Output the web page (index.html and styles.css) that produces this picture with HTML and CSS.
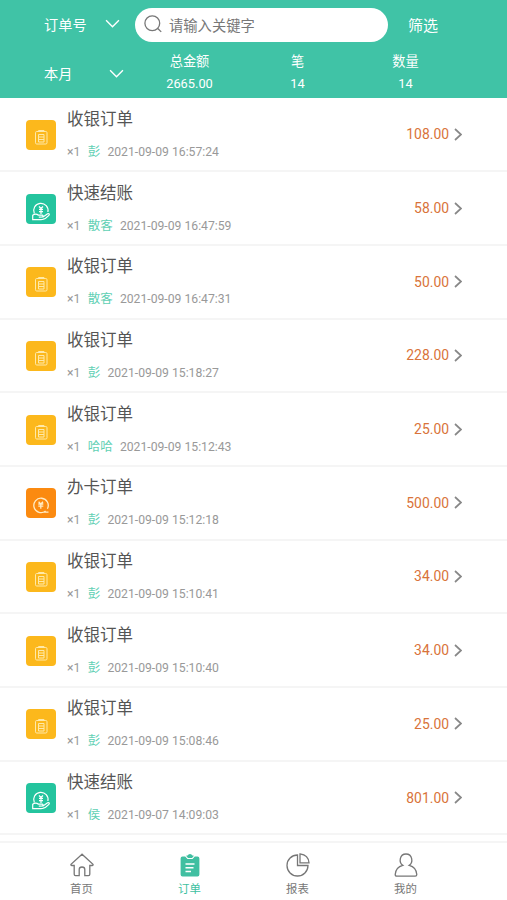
FILE: index.html
```html
<!DOCTYPE html>
<html lang="zh-CN">
  <head>
    <meta charset="UTF-8" />
    <meta name="viewport" content="width=device-width, initial-scale=1.0" />
    <title>订单</title>
    <link rel="stylesheet" href="styles.css" />
  </head>
  <body>
    <!-- shared icons -->
    <svg class="sprite" aria-hidden="true">
      <symbol id="down" viewBox="0 0 14 8">
        <path d="M1 1l6 6 6-6" />
      </symbol>
      <symbol id="right" viewBox="0 0 8 13">
        <path d="M1 1l6 5.5L1 12" />
      </symbol>
      <symbol id="cashier" viewBox="0 0 30 30">
        <rect x="9.5" y="11.5" width="11.5" height="12.5" rx="1.2" />
        <path d="M12.5 11.5v-1H18v1M12.5 14.5h5.5v7.5h-5.5zM12.5 17h5.5M12.5 19.5h5.5" />
      </symbol>
      <symbol id="checkout" viewBox="0 0 30 30">
        <path d="M8.3 19.5a7.2 7.2 0 1 1 13.6-1.5" />
        <path d="M13 12.5l2 2 2-2M15 14.5v5.5M13 15.3h4M13 17.6h4" />
        <path d="M6.7 21.2c2.5-2 4.3-1.2 5.8 0h3.8c1.2.2.9 1.7-.3 1.8l-3.2.2 4.3-.2 4.5-3.2c1.4-.7 2.3.5 1.3 1.5-2 2.2-3.8 3.5-6.2 4-3 .5-6.5.1-10 .3z" />
      </symbol>
      <symbol id="card" viewBox="0 0 30 30">
        <path d="M19.6 23a7.2 7.2 0 1 1 1.8-2.2M18 24.2h4.5" />
        <path d="M12.6 13.8l2.2 2.2 2.2-2.2M12.3 16h5M12.3 18.2h5M14.8 16v4.8" />
      </symbol>
    </svg>

    <header>
      <div class="search-row">
        <div class="picker picker-type">订单号<svg class="down"><use href="#down" /></svg></div>
        <div class="search">
          <svg viewBox="0 0 18 18">
            <circle cx="8.3" cy="8.3" r="7.4" />
            <path d="M13.8 13.5l3.4 3.4" />
          </svg>
          <span>请输入关键字</span>
        </div>
        <div class="filter">筛选</div>
      </div>
      <div class="total-row">
        <div class="picker picker-date">本月<svg class="down"><use href="#down" /></svg></div>
        <div class="total"><span>总金额</span><b>2665.00</b></div>
        <div class="total"><span>笔</span><b>14</b></div>
        <div class="total"><span>数量</span><b>14</b></div>
      </div>
    </header>

    <main>
      <div class="order">
        <svg class="type cashier"><use href="#cashier" /></svg>
        <div class="info">
          <h2>收银订单</h2>
          <p>×1<em>彭</em><time>2021-09-09 16:57:24</time></p>
        </div>
        <span class="amount">108.00</span>
        <svg class="right"><use href="#right" /></svg>
      </div>
      <div class="order">
        <svg class="type checkout"><use href="#checkout" /></svg>
        <div class="info">
          <h2>快速结账</h2>
          <p>×1<em>散客</em><time>2021-09-09 16:47:59</time></p>
        </div>
        <span class="amount">58.00</span>
        <svg class="right"><use href="#right" /></svg>
      </div>
      <div class="order">
        <svg class="type cashier"><use href="#cashier" /></svg>
        <div class="info">
          <h2>收银订单</h2>
          <p>×1<em>散客</em><time>2021-09-09 16:47:31</time></p>
        </div>
        <span class="amount">50.00</span>
        <svg class="right"><use href="#right" /></svg>
      </div>
      <div class="order">
        <svg class="type cashier"><use href="#cashier" /></svg>
        <div class="info">
          <h2>收银订单</h2>
          <p>×1<em>彭</em><time>2021-09-09 15:18:27</time></p>
        </div>
        <span class="amount">228.00</span>
        <svg class="right"><use href="#right" /></svg>
      </div>
      <div class="order">
        <svg class="type cashier"><use href="#cashier" /></svg>
        <div class="info">
          <h2>收银订单</h2>
          <p>×1<em>哈哈</em><time>2021-09-09 15:12:43</time></p>
        </div>
        <span class="amount">25.00</span>
        <svg class="right"><use href="#right" /></svg>
      </div>
      <div class="order">
        <svg class="type card"><use href="#card" /></svg>
        <div class="info">
          <h2>办卡订单</h2>
          <p>×1<em>彭</em><time>2021-09-09 15:12:18</time></p>
        </div>
        <span class="amount">500.00</span>
        <svg class="right"><use href="#right" /></svg>
      </div>
      <div class="order">
        <svg class="type cashier"><use href="#cashier" /></svg>
        <div class="info">
          <h2>收银订单</h2>
          <p>×1<em>彭</em><time>2021-09-09 15:10:41</time></p>
        </div>
        <span class="amount">34.00</span>
        <svg class="right"><use href="#right" /></svg>
      </div>
      <div class="order">
        <svg class="type cashier"><use href="#cashier" /></svg>
        <div class="info">
          <h2>收银订单</h2>
          <p>×1<em>彭</em><time>2021-09-09 15:10:40</time></p>
        </div>
        <span class="amount">34.00</span>
        <svg class="right"><use href="#right" /></svg>
      </div>
      <div class="order">
        <svg class="type cashier"><use href="#cashier" /></svg>
        <div class="info">
          <h2>收银订单</h2>
          <p>×1<em>彭</em><time>2021-09-09 15:08:46</time></p>
        </div>
        <span class="amount">25.00</span>
        <svg class="right"><use href="#right" /></svg>
      </div>
      <div class="order">
        <svg class="type checkout"><use href="#checkout" /></svg>
        <div class="info">
          <h2>快速结账</h2>
          <p>×1<em>侯</em><time>2021-09-07 14:09:03</time></p>
        </div>
        <span class="amount">801.00</span>
        <svg class="right"><use href="#right" /></svg>
      </div>
    </main>

    <nav>
      <a>
        <svg viewBox="0 0 24 24">
          <path d="M12 1.2L1 11.3q-.4 1.2.8 1.2h2.4v8.8q0 1.3 1.3 1.3h3.7v-6q0-2.6 2.8-2.6t2.8 2.6v6h3.7q1.3 0 1.3-1.3v-8.8h2.4q1.2 0 .8-1.2z" />
        </svg>
        首页
      </a>
      <a class="active">
        <svg viewBox="0 0 24 24">
          <path class="fill" d="M4.5 3.5h2.7L9.5 6h5l2.3-2.5h2.7q1.9 0 1.9 1.9v16.2q0 1.9-1.9 1.9h-15q-1.9 0-1.9-1.9V5.4q0-1.9 1.9-1.9z" />
          <path class="fill" d="M8 2.7q1.9 0 2.5-1.2 1.5-1.2 3 0 .6 1.2 2.5 1.2L14 5h-4z" />
          <path class="lines" d="M7.5 11h9M7.5 14.8h8M7.5 18.6h5.5" />
        </svg>
        订单
      </a>
      <a>
        <svg viewBox="0 0 24 24">
          <path d="M11.5 2A10.5 10.5 0 1 0 22 12.5H11.5z" />
          <path d="M14 .9v9h9Q22.500 2 14 .9z" />
        </svg>
        报表
      </a>
      <a>
        <svg viewBox="0 0 24 24">
          <path d="M8.8 12.300C4.500 9.500 5.500 1 12 1s7.500 8.500 3.200 11.300c4 1 7.300 4.500 7.600 9.200q0 1.700-1.600 1.700H2.800q-1.600 0-1.600-1.700c.3-4.700 3.600-8.200 7.600-9.200z" />
        </svg>
        我的
      </a>
    </nav>
  </body>
</html>
```
FILE: styles.css
```css
* {
  box-sizing: border-box;
}

body {
  display: flex;
  flex-direction: column;
  height: 900px;
  margin: 0;
  overflow: hidden;
  background: #fff;
  font-family: Roboto, "Noto Sans CJK SC", sans-serif;
}

svg {
  flex: none;
  fill: none;
  stroke: currentColor;
}

.sprite {
  position: absolute;
  width: 0;
  height: 0;
}

header {
  height: 98px;
  padding-top: 8px;
  background: #40c3a6;
  color: #fff;
}

.search-row {
  display: flex;
  align-items: center;
  height: 34px;
}

.picker {
  display: flex;
  align-items: center;
  justify-content: space-between;
  margin-left: 44px;
  padding-bottom: 3px;
  font-size: 14.2px;
}

.picker-type {
  width: 76px;
}

.picker-date {
  width: 80px;
  height: 49px;
  margin-right: 11.5px;
}

.down {
  width: 15px;
  height: 9px;
  stroke-width: 1.3;
}

.search {
  display: flex;
  align-items: center;
  width: 253px;
  height: 34px;
  margin-left: 15px;
  padding: 0 0 2px 9px;
  border-radius: 17px;
  background: #fff;
  color: #777;
  font-size: 14.3px;
}

.search svg {
  width: 18px;
  height: 18px;
  margin-right: 7px;
  stroke-width: 1.3;
}

.filter {
  margin-left: 20px;
  padding-bottom: 2px;
  font-size: 15px;
}

.total-row {
  display: flex;
  padding-top: 8px;
}

.total {
  display: flex;
  flex-direction: column;
  align-items: center;
  width: 108px;
  padding-top: 1px;
  font-size: 13.2px;
  line-height: 22px;
}

.total b {
  font-size: 12.8px;
  font-weight: 400;
}

main {
  height: 743px;
  padding-top: 0.5px;
}

.order {
  display: flex;
  align-items: center;
  height: 73.7px;
  padding: 1px 45px 0 26px;
  border-bottom: 2px solid #f5f5f5;
}

.type {
  width: 30px;
  height: 30px;
  margin-right: 11px;
  border-radius: 4px;
  color: #fff;
}

.cashier {
  background: #fcb81c;
  color: #ffe9a8;
}

.checkout {
  background: #24c49e;
  stroke-width: 1.2;
}

.card {
  background: #fb8a10;
  color: #ffebc4;
  stroke-width: 1.3;
}

.info {
  flex: 1;
}

.info h2 {
  margin: 1px 0 11px;
  color: #555;
  font-size: 16.5px;
  font-weight: 400;
  line-height: 22px;
}

.info p {
  display: flex;
  margin: 0;
  color: #999;
  font-size: 12.2px;
  line-height: 20px;
}

.info em {
  margin: 0 7px 0 7.5px;
  color: #5fd0b4;
  font-size: 12.5px;
  font-style: normal;
}

.amount {
  padding-bottom: 1px;
  color: #d9733a;
  font-size: 13.9px;
}

.right {
  width: 8px;
  height: 13px;
  margin: 0 0 1px 5px;
  color: #888;
  stroke-width: 1.7;
}

nav {
  display: flex;
  flex: 1;
  padding: 10px 0 0 27.5px;
  border-top: 2px solid #f5f5f5;
}

nav a {
  display: flex;
  flex: none;
  flex-direction: column;
  align-items: center;
  width: 108px;
  color: #777;
  font-size: 11.4px;
  line-height: 20px;
}

nav svg {
  width: 24px;
  height: 24px;
  margin-bottom: 2px;
  stroke-width: 1.3;
}

nav .active {
  color: #40bfa1;
}

.fill {
  fill: currentColor;
  stroke: none;
}

.lines {
  stroke: #fff;
  stroke-width: 1.5;
}
```
